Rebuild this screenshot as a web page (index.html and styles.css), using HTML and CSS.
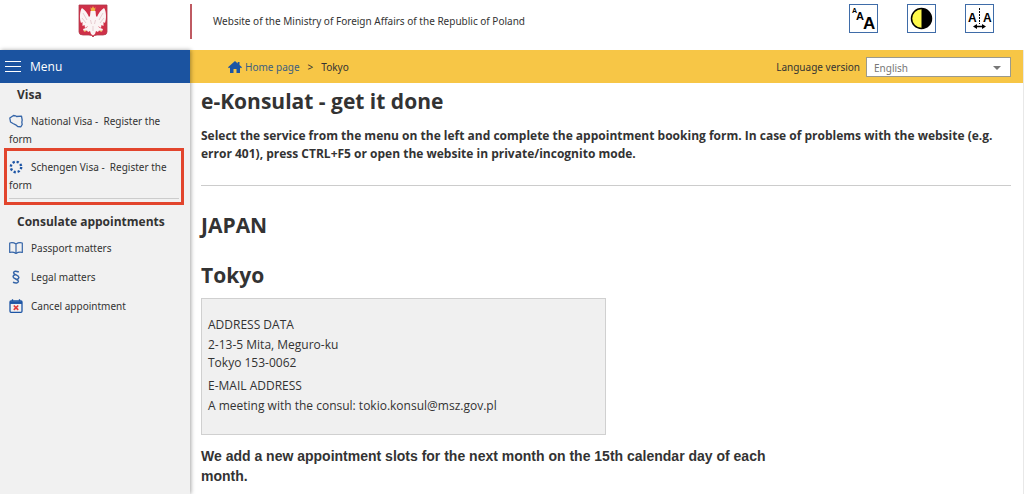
FILE: index.html
```html
<!DOCTYPE html>
<html lang="en">
<head>
    <meta charset="UTF-8">
    <meta name="viewport" content="width=device-width, initial-scale=1.0">
    <title>e-Konsulat</title>
    <link rel="stylesheet" href="styles.css">
</head>
<body>
    <header class="header">
        <div class="logo">
            <svg width="30" height="34" viewBox="0 0 30 34" role="img" aria-label="Coat of arms">
                <path d="M1 1h28v27q0 3-4 3h-6q-3 0-4 2q-1-2-4-2H5q-4 0-4-3z" fill="#cf3048" stroke="#b03a4b" stroke-width=".8"/>
                <path d="M12.500 7L12 12l-1 1C9.500 9 7 6 4 4C1.500 7 1.500 15 3 19l1.500-1v4l2-1 .5 3 3-2c-1 2-3 2.500-5 3l1 2.500 3-1 1 1.500 2-1 1 3 2 1.500 2-1.500 1-3 2 1 1-1.500 3 1 1-2.500c-2-.5-4-1-5-3l3 2 .5-3 2 1v-4l1.500 1c1.500-4 1.500-12-1-15c-3 2-5.500 5-7 9l-1-1-.5-5z" fill="#fbf4f4"/>
                <path d="M12.500 3l1.300 1.500L15 2l1.200 2.500L17.500 3l-.5 4h-4z" fill="#efb544"/>
                <path d="M5 9l4 7M4 14l4 5M25 9l-4 7M26 14l-4 5M12.500 16l1 4M17.500 16l-1 4M15 22v5" fill="none" stroke="#dfbcc2" stroke-width=".7"/>
                <path d="M6 27h2M22 27h2" stroke="#efb544" stroke-width="1"/>
            </svg>
        </div>
        <div class="ministry">Website of the Ministry of Foreign Affairs of the Republic of Poland</div>
        <div class="tools">
            <button class="tool" type="button" aria-label="Font size">
                <svg class="letters" width="27" height="27" viewBox="0 0 27 27">
                    <text x="2" y="8" font-size="7">A</text>
                    <text x="6" y="15" font-size="11">A</text>
                    <text x="13" y="24" font-size="17">A</text>
                </svg>
            </button>
            <button class="tool" type="button" aria-label="Contrast">
                <svg width="27" height="27" viewBox="0 0 27 27">
                    <circle cx="13.500" cy="13.500" r="10" fill="#fff94a" stroke="#000" stroke-width="1.500"/>
                    <path d="M13.500 3.500a10 10 0 0 1 0 20z"/>
                </svg>
            </button>
            <button class="tool" type="button" aria-label="Letter spacing">
                <svg class="letters" width="27" height="27" viewBox="0 0 27 27">
                    <text x="2" y="17" font-size="12">A</text>
                    <text x="17" y="17" font-size="12">A</text>
                    <path d="M13.500 3v16" stroke="#000" stroke-width="1" stroke-dasharray="2 1"/>
                    <path d="M9 21.500h9" stroke="#000" stroke-width="1.500"/>
                    <path d="M7 21.500l4-2.500v5zM20 21.500L16 19v5z"/>
                </svg>
            </button>
        </div>
    </header>

    <div class="layout">
        <aside class="sidebar">
            <button class="menu-btn" type="button"><span class="burger"></span>Menu</button>
            <nav class="menu">
                <h2 class="menu-title">Visa</h2>
                <ul class="menu-list">
                    <li class="menu-item two-lines"><a href="#">
                        <svg class="icon" viewBox="0 0 14 14" fill="none" stroke="#3565a8" stroke-width="1.300" stroke-linejoin="round"><path d="M.8 4L4.500 1.500l2 .3 1 .7 5-.3.700 4-.4 2 .4 2.300-1.300 2.300-3.200-.3-2-1.700-2.700-1.300L1.500 8z"/></svg>National Visa - &nbsp;Register the form</a>
                    </li>
                    <li class="menu-item two-lines marked"><a href="#">
                        <svg class="icon" viewBox="0 0 14 14" fill="none" stroke="#1d55a5"><circle cx="7" cy="7" r="5.200" stroke-width="2.400" stroke-dasharray="2.200 1.884"/></svg>Schengen Visa - &nbsp;Register the form</a>
                    </li>
                </ul>
                <h2 class="menu-title">Consulate appointments</h2>
                <ul class="menu-list">
                    <li class="menu-item"><a href="#">
                        <svg class="icon" viewBox="0 0 14 14" fill="none" stroke="#3565a8" stroke-width="1.200" stroke-linejoin="round"><path d="M7 3Q4 1 .7 2v9.500Q4 10.500 7 12.500q3-2 6.300-1V2Q10 1 7 3zv9.500"/></svg>Passport matters</a>
                    </li>
                    <li class="menu-item"><a href="#">
                        <svg class="icon" viewBox="0 0 14 14" fill="none" stroke="#3565a8" stroke-width="1.500"><path d="M9.800 2Q5 0 4.600 2.700c0 2 5.300 2.500 5.300 4.800Q9.700 9 8 9.300M6 4.700Q4 5.200 4.100 6.700c0 2.200 5.500 2.500 5.300 4.700Q8.500 14 4 12.200"/></svg>Legal matters</a>
                    </li>
                    <li class="menu-item"><a href="#">
                        <svg class="icon" viewBox="0 0 14 14" fill="none" stroke="#1d55a5" stroke-width="1.300"><rect x="1" y="2" width="12" height="11.300" rx="1"/><path d="M1 3.700h12" stroke-width="2.500"/><path d="M3.500 .3v2M10.500 .3v2"/><path d="M4.800 6.500l4.400 4.400M9.200 6.500l-4.400 4.400" stroke="#e23b3b" stroke-width="1.700"/></svg>Cancel appointment</a>
                    </li>
                </ul>
            </nav>
        </aside>

        <div class="page">
            <div class="topbar">
                <div class="crumbs">
                    <svg class="home" width="14" height="12" viewBox="0 0 14 12" fill="#1d55a5"><path d="M7 0l2.700 2.400V1h1.800v3L14 6.300l-1 .9-1-.8V12H8.500V8h-3v4H2V6.400l-1 .8-1-.9z"/></svg>
                    <a href="#">Home page</a>
                    <span class="sep">&gt;</span>
                    <span>Tokyo</span>
                </div>
                <div class="language">
                    <label for="lang">Language version</label>
                    <div class="select">
                        <select id="lang">
                            <option>English</option>
                        </select>
                    </div>
                </div>
            </div>
            <main class="content">
                <h1>e-Konsulat - get it done</h1>
                <p class="intro">Select the service from the menu on the left and complete the appointment booking form. In case of problems with the website (e.g. error 401), press CTRL+F5 or open the website in private/incognito mode.</p>
                <hr>
                <h2>JAPAN</h2>
                <h2>Tokyo</h2>
                <div class="address">
                    <h3>ADDRESS DATA</h3>
                    <p>2-13-5 Mita, Meguro-ku<br>Tokyo 153-0062</p>
                    <h3>E-MAIL ADDRESS</h3>
                    <p>A meeting with the consul: tokio.konsul@msz.gov.pl</p>
                </div>
                <p class="notice">We add a new appointment slots for the next month on the 15th calendar day of each month.</p>
            </main>
        </div>
    </div>
</body>
</html>
```

FILE: styles.css
```css
* {
    box-sizing: border-box;
}
body {
    margin: 0;
    font-family: "Open Sans", "Noto Sans", sans-serif;
    font-size: 12px;
    color: #333;
    background: #fff;
}
h1, h2, h3, p, ul {
    margin: 0;
    padding: 0;
}
a {
    color: inherit;
    text-decoration: none;
}
button {
    font-family: inherit;
    cursor: pointer;
}

/* header */
.header {
    display: flex;
    align-items: flex-start;
    height: 50px;
    padding: 4px 30px 0 0;
}
.logo {
    width: 190px;
    padding-left: 78px;
}
.ministry {
    flex: 1;
    height: 35px;
    padding-left: 21px;
    border-left: 2px solid #bf5a62;
    line-height: 34px;
}
.ministry, .menu-item, .topbar {
    font-family: "Noto Sans", "Open Sans", sans-serif;
    font-size: 10px;
}
.tools {
    display: flex;
    gap: 29px;
}
.tool {
    width: 29px;
    height: 29px;
    padding: 0;
    border: 1px solid #3f6ca8;
    background: #fff;
}
.tool svg {
    display: block;
}
.letters {
    overflow: visible;
    font-family: "Liberation Sans", Arial, sans-serif;
    font-weight: bold;
}

/* sidebar */
.layout {
    display: flex;
    min-height: calc(100vh - 50px);
}
.sidebar {
    position: relative;
    z-index: 1;
    flex: 0 0 190px;
    background: #f1f1f1;
    box-shadow: 1px 0 4px rgba(0, 0, 0, .35);
}
.menu-btn {
    display: flex;
    align-items: center;
    gap: 9px;
    width: 100%;
    height: 33px;
    padding: 0 5px;
    border: 0;
    background: #1b53a0;
    color: #fff;
    font-size: 12px;
}
.burger {
    width: 16px;
    height: 11px;
    border-top: 1px solid #fff;
    border-bottom: 1px solid #fff;
    background: linear-gradient(#fff, #fff) center / 100% 1px no-repeat;
}
.menu-title {
    padding-left: 17px;
    font-size: 12px;
    line-height: 23px;
}
.menu-list {
    margin-bottom: 5px;
    list-style: none;
}
.menu-item {
    padding: 6px 9px 5px;
    line-height: 18px;
}
.menu-item a {
    display: block;
}
.icon {
    width: 14px;
    height: 14px;
    margin-right: 8px;
    vertical-align: -3px;
}
.two-lines {
    padding-bottom: 0;
}
/* highlighted entry */
.marked {
    margin: 0 6px 0 4px;
    padding: 7px 2px 3px;
    border: 3px solid #e2452d;
}
.marked a {
    padding-bottom: 4px;
    border-bottom: 1px solid #ccc;
}

/* yellow bar */
.page {
    flex: 1;
    min-width: 0;
    border-right: 1px solid #e8e8e8;
}
.topbar {
    display: flex;
    justify-content: space-between;
    align-items: center;
    height: 33px;
    padding: 0 12px 0 38px;
    background: #f7c646;
}
.crumbs {
    display: flex;
    align-items: center;
    gap: 3px;
}
.crumbs a {
    color: #3b5f80;
}
.sep {
    margin: 0 5px;
}
.language {
    display: flex;
    align-items: center;
    gap: 6px;
}
.select {
    position: relative;
}
.select::after {
    content: "";
    position: absolute;
    top: 9px;
    right: 10px;
    border: 4px solid transparent;
    border-top-color: #777;
    pointer-events: none;
}
.select select {
    display: block;
    width: 145px;
    height: 20px;
    padding: 2px 7px 0;
    appearance: none;
    border: 1px solid #9b9a8c;
    border-radius: 0;
    background: #fff;
    color: #777;
    font-family: inherit;
    font-size: 10px;
}

/* content */
.content {
    padding: 3px 12px 0 11px;
}
h1, .content h2 {
    font-size: 21px;
    line-height: 30px;
}
.intro {
    margin-top: 11px;
    font-weight: bold;
    line-height: 18px;
}
hr {
    margin: 22px 0 24px;
    border: 0;
    border-top: 1px solid #ccc;
}
.content h2 + h2 {
    margin-top: 20px;
}
.address {
    max-width: 405px;
    margin-top: 8px;
    padding: 17px 6px 14px;
    border: 1px solid #d0d0d0;
    background: #f0f0f0;
    line-height: 18px;
}
.address h3 {
    font-size: 12px;
    font-weight: normal;
}
.address p {
    margin: 2px 0 5px;
}
.notice {
    max-width: 590px;
    margin-top: 11px;
    font-family: "Liberation Sans", Arial, sans-serif;
    font-size: 14px;
    font-weight: bold;
    line-height: 20px;
}
```
